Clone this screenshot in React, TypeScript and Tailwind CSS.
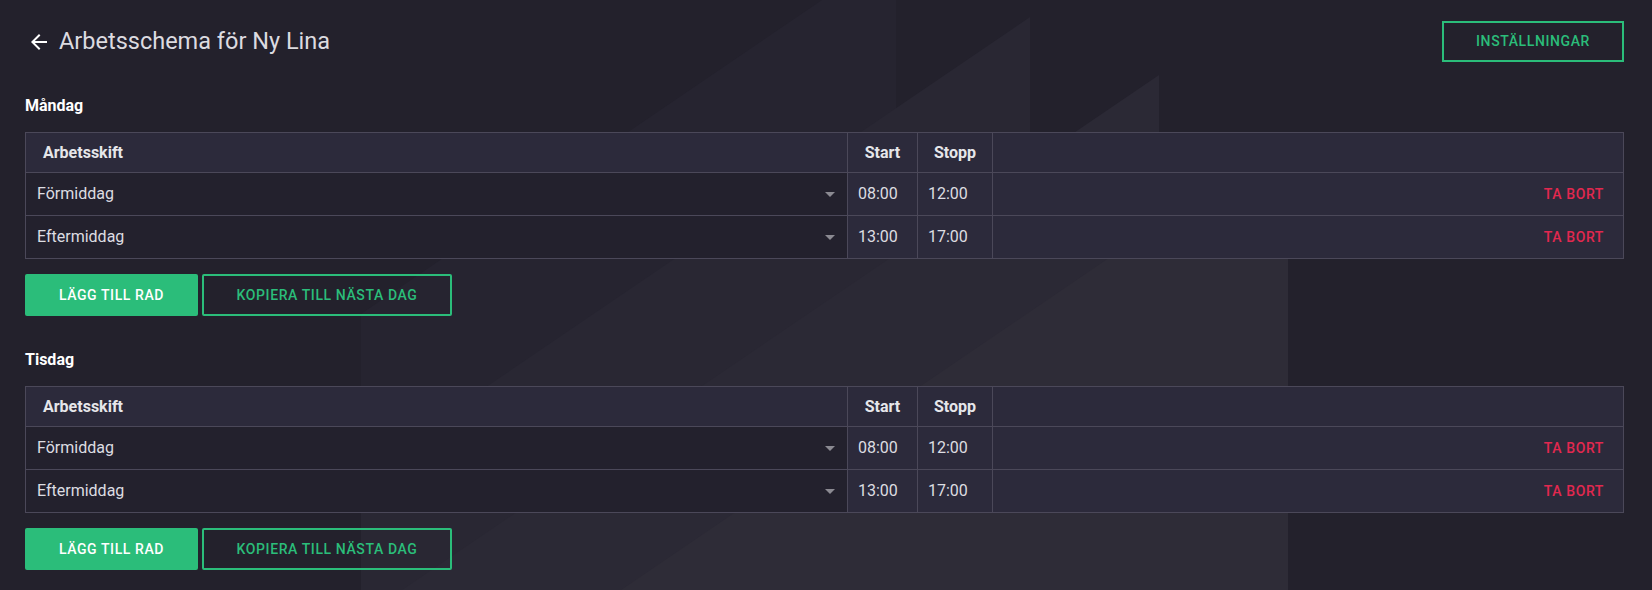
import React from "react";

type Shift = { name: string; start: string; stop: string };

const days: { name: string; shifts: Shift[] }[] = [
  {
    name: "Måndag",
    shifts: [
      { name: "Förmiddag", start: "08:00", stop: "12:00" },
      { name: "Eftermiddag", start: "13:00", stop: "17:00" },
    ],
  },
  {
    name: "Tisdag",
    shifts: [
      { name: "Förmiddag", start: "08:00", stop: "12:00" },
      { name: "Eftermiddag", start: "13:00", stop: "17:00" },
    ],
  },
];

function Backdrop() {
  return (
    <svg
      className="absolute inset-0 pointer-events-none"
      width="1652"
      height="590"
      viewBox="0 0 1652 590"
    >
      <polygon points="822,0 896,0 896,590 361,590 361,314" fill="#262430" />
      <polygon points="1030,17 1030,590 361,590 361,472" fill="#292733" />
      <polygon points="1159,75 1159,590 402,590" fill="#2b2935" />
      <polygon points="1288,136 1288,590 621,590" fill="#2e2c37" />
    </svg>
  );
}

function DayTable({ shifts }: { shifts: Shift[] }) {
  return (
    <div className="border border-[#4b4859]">
      {/* header */}
      <div className="flex h-[39px] bg-[#2c2a3b] text-[16px] font-bold text-[#e6e6ea]">
        <div className="flex-1 flex items-center pl-[17px]">Arbetsskift</div>
        <div className="w-[70px] flex items-center justify-center border-l border-[#4b4859]">Start</div>
        <div className="w-[75px] flex items-center justify-center border-l border-[#4b4859]">Stopp</div>
        <div className="w-[631px] border-l border-[#4b4859]" />
      </div>
      {shifts.map((s, i) => (
        <div key={i} className="flex h-[43px] border-t border-[#4b4859] text-[16px] text-[#dddde2]">
          <div className="flex-1 flex items-center justify-between pl-[11px] pr-[12px] bg-[#23212d]">
            <span>{s.name}</span>
            <svg width="10" height="5" viewBox="0 0 10 5">
              <path d="M0 0 L10 0 L5 5 Z" fill="#8b8a92" />
            </svg>
          </div>
          <div className="w-[70px] flex items-center pl-[10px] bg-[#2c2a3b] border-l border-[#4b4859]">{s.start}</div>
          <div className="w-[75px] flex items-center pl-[10px] bg-[#2c2a3b] border-l border-[#4b4859]">{s.stop}</div>
          <div className="w-[631px] flex items-center justify-end pr-[19px] bg-[#2c2a3b] border-l border-[#4b4859]">
            <button type="button" className="text-[14px] font-medium tracking-[0.6px] text-[#e2284f]">
              TA BORT
            </button>
          </div>
        </div>
      ))}
    </div>
  );
}

export default function App() {
  return (
    <div
      className="relative w-[1652px] h-[590px] overflow-hidden bg-[#23212c]"
      style={{ fontFamily: "Roboto, 'Liberation Sans', sans-serif" }}
    >
      <Backdrop />
      <div className="relative pl-[25px] pr-[28px]">
        <div className="flex items-center justify-between pt-[21px]">
          <div className="flex items-center gap-[8px]">
            <svg width="24" height="24" viewBox="0 0 24 24" className="ml-[2px]">
              <path d="M20 11H7.83l5.59-5.59L12 4l-8 8 8 8 1.41-1.41L7.83 13H20v-2z" fill="#ffffff" />
            </svg>
            <h1 className="text-[23.5px] font-normal text-[#dcdbe0]">Arbetsschema för Ny Lina</h1>
          </div>
          <button
            type="button"
            className="w-[182px] h-[41px] border-2 border-[#2bbd7a] text-[#2bbd7a] text-[14px] font-medium tracking-[0.6px]"
          >
            INSTÄLLNINGAR
          </button>
        </div>

        {days.map((d) => (
          <section key={d.name} className="mt-[34px]">
            <h2 className="text-[16px] leading-[20px] font-bold text-white mb-[16px]">{d.name}</h2>
            <DayTable shifts={d.shifts} />
            <div className="flex gap-[4px] mt-[15px]">
              <button
                type="button"
                className="w-[173px] h-[42px] rounded-[2px] bg-[#2bbd7a] text-white text-[14px] font-medium tracking-[0.6px]"
              >
                LÄGG TILL RAD
              </button>
              <button
                type="button"
                className="w-[250px] h-[42px] rounded-[2px] border-2 border-[#2bbd7a] text-[#2bbd7a] text-[14px] font-medium tracking-[0.6px]"
              >
                KOPIERA TILL NÄSTA DAG
              </button>
            </div>
          </section>
        ))}
      </div>
    </div>
  );
}
